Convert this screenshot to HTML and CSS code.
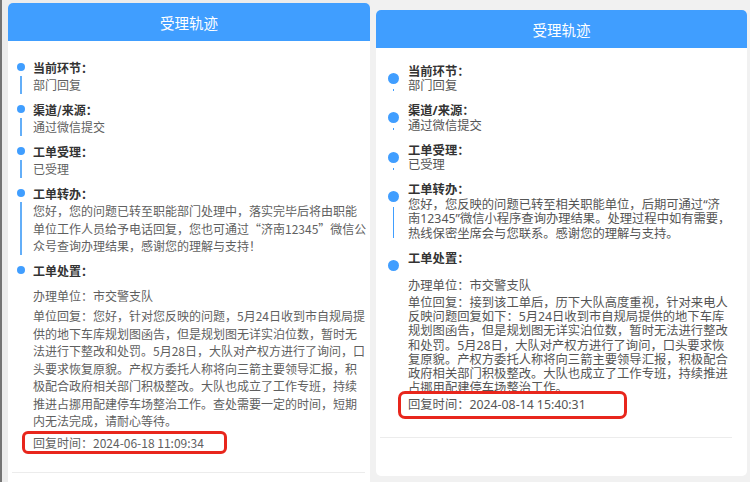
FILE: index.html
```html
<!DOCTYPE html>
<html lang="zh-CN">
<head>
  <meta charset="UTF-8" />
  <title>受理轨迹</title>
  <meta name="viewport" content="width=device-width, initial-scale=1.0" />
  <link rel="stylesheet" href="styles.css">
</head>
<body>
  <div class="screens">

    <section class="phone phone-a">
      <div class="card">
        <div class="card-head">受理轨迹</div>
        <ul class="track">
          <li class="step">
            <div class="mark"><span class="dot"></span><span class="line"></span></div>
            <div class="step-body">
              <p class="step-title">当前环节：</p>
              <p class="step-text">部门回复</p>
            </div>
          </li>
          <li class="step">
            <div class="mark"><span class="dot"></span><span class="line"></span></div>
            <div class="step-body">
              <p class="step-title">渠道/来源：</p>
              <p class="step-text">通过微信提交</p>
            </div>
          </li>
          <li class="step">
            <div class="mark"><span class="dot"></span><span class="line"></span></div>
            <div class="step-body">
              <p class="step-title">工单受理：</p>
              <p class="step-text">已受理</p>
            </div>
          </li>
          <li class="step">
            <div class="mark"><span class="dot"></span><span class="line"></span></div>
            <div class="step-body">
              <p class="step-title">工单转办：</p>
              <p class="step-text">您好，您的问题已转至职能部门处理中，落实完毕后将由职能单位工作人员给予电话回复，您也可通过“济南12345”微信公众号查询办理结果，感谢您的理解与支持！</p>
            </div>
          </li>
          <li class="step step-last">
            <div class="mark"><span class="dot"></span></div>
            <div class="step-body">
              <p class="step-title">工单处置：</p>
              <p class="step-text unit">办理单位：市交警支队</p>
              <p class="step-text reply">单位回复：您好，针对您反映的问题，5月24日收到市自规局提供的地下车库规划图函告，但是规划图无详实泊位数，暂时无法进行下整改和处罚。5月28日，大队对产权方进行了询问，口头要求恢复原貌。产权方委托人称将向三箭主要领导汇报，积极配合政府相关部门积极整改。大队也成立了工作专班，持续推进占挪用配建停车场整治工作。查处需要一定的时间，短期内无法完成，请耐心等待。</p>
              <p class="step-text"><span class="reply-time">回复时间：2024-06-18 11:09:34</span></p>
            </div>
          </li>
        </ul>
        <div class="card-rule"></div>
      </div>
    </section>

    <section class="phone phone-b">
      <div class="card">
        <div class="card-head">受理轨迹</div>
        <ul class="track">
          <li class="step">
            <div class="mark"><span class="dot"></span><span class="line"></span></div>
            <div class="step-body">
              <p class="step-title">当前环节：</p>
              <p class="step-text">部门回复</p>
            </div>
          </li>
          <li class="step">
            <div class="mark"><span class="dot"></span><span class="line"></span></div>
            <div class="step-body">
              <p class="step-title">渠道/来源：</p>
              <p class="step-text">通过微信提交</p>
            </div>
          </li>
          <li class="step">
            <div class="mark"><span class="dot"></span><span class="line"></span></div>
            <div class="step-body">
              <p class="step-title">工单受理：</p>
              <p class="step-text">已受理</p>
            </div>
          </li>
          <li class="step">
            <div class="mark"><span class="dot"></span><span class="line"></span></div>
            <div class="step-body">
              <p class="step-title">工单转办：</p>
              <p class="step-text">您好，您反映的问题已转至相关职能单位，后期可通过“济南12345”微信小程序查询办理结果。处理过程中如有需要，热线保密坐席会与您联系。感谢您的理解与支持。</p>
            </div>
          </li>
          <li class="step step-last">
            <div class="mark"><span class="dot"></span></div>
            <div class="step-body">
              <p class="step-title">工单处置：</p>
              <p class="step-text unit">办理单位：市交警支队</p>
              <p class="step-text reply">单位回复：接到该工单后，历下大队高度重视，针对来电人反映问题回复如下：5月24日收到市自规局提供的地下车库规划图函告，但是规划图无详实泊位数，暂时无法进行整改和处罚。5月28日，大队对产权方进行了询问，口头要求恢复原貌。产权方委托人称将向三箭主要领导汇报，积极配合政府相关部门积极整改。大队也成立了工作专班，持续推进占挪用配建停车场整治工作。</p>
              <p class="step-text"><span class="reply-time">回复时间：2024-08-14 15:40:31</span></p>
            </div>
          </li>
        </ul>
        <div class="card-rule"></div>
      </div>
    </section>

  </div>
</body>
</html>
```

FILE: styles.css
```css
:root {
  --blue: #409eff;
  --title: #333;
  --text: #5f5f5f;
  --mark-red: #e8261c;
}
* {
  margin: 0;
  padding: 0;
  box-sizing: border-box;
}
html, body {
  width: 750px;
  height: 482px;
  overflow: hidden;
  background: #efefef;
  font-family: "Noto Sans CJK SC", "Noto Sans", sans-serif;
}
ul {
  list-style: none;
}
.screens {
  display: flex;
  height: 482px;
}
.phone {
  display: flex;
  flex-direction: column;
}
.card {
  flex: 1;
  background: #fff;
  border-radius: 5px 5px 0 0;
}
.card-head {
  height: 38px;
  display: flex;
  align-items: center;
  justify-content: center;
  background: var(--blue);
  color: #fff;
  font-size: 14.5px;
  border-radius: 5px 5px 0 0;
}
.step {
  display: grid;
}
.mark {
  display: flex;
  flex-direction: column;
  align-items: center;
}
.dot {
  flex: none;
  border-radius: 50%;
  background: var(--blue);
}
.line {
  flex: 1;
  width: 1.5px;
  background: var(--blue);
}
.step-title {
  font-weight: 700;
  color: var(--title);
}
.step-text {
  color: var(--text);
}
.reply-time {
  display: inline-block;
  border: 3px solid var(--mark-red);
  border-radius: 6px;
}
.card-rule {
  height: 1px;
  background: #ececec;
}

/* left screenshot */
.phone-a {
  width: 370px;
  border-left: 2px solid #747474;
  background: #ececec;
  padding: 3px 0 0 6px;
}
.phone-a .track {
  padding: 17.5px 2.5px 0 9px;
  font-size: 12px;
  line-height: 17.5px;
}
.phone-a .step {
  grid-template-columns: 8px 1fr;
  column-gap: 8px;
  padding-bottom: 7px;
}
.phone-a .step-last {
  padding-bottom: 0;
}
.phone-a .dot {
  width: 8px;
  height: 8px;
  margin-top: 4.75px;
}
.phone-a .line {
  margin-top: 5px;
  width: 1.2px;
  background: #63aef8;
}
.phone-a .unit {
  margin-top: 8px;
}
.phone-a .reply {
  margin-top: 2.5px;
}
.phone-a .reply-time {
  margin: 1.5px 0 0 -11px;
  padding: 0 20px 0 8px;
  line-height: 17px;
}
.phone-a .card-rule {
  margin: 18px 5px 0 4px;
}

/* right screenshot, other phone font */
.phone-b {
  width: 380px;
  background: #f1f1f1;
  padding: 10px 3px 6px 6px;
  font-family: "Noto Sans", "Noto Sans CJK SC", sans-serif;
}
.phone-b .card {
  border-radius: 5px;
}
.phone-b .track {
  padding: 16.75px 15px 0 12px;
  font-size: 12.3px;
  line-height: 14.5px;
}
.phone-b .step {
  grid-template-columns: 11px 1fr;
  column-gap: 9px;
  padding-bottom: 10.5px;
}
.phone-b .step-last {
  padding-bottom: 0;
}
.phone-b .dot {
  width: 11px;
  height: 11px;
  margin-top: 8px;
}
.phone-b .line {
  margin: 5px 0 3px;
}
.phone-b .step-text {
  color: #555;
}
.phone-b .unit {
  margin-top: 12.5px;
}
.phone-b .reply {
  margin-top: 3px;
  line-height: 14.1px;
}
.phone-b .reply-time {
  margin: -4px 0 0 -10px;
  padding: 4px 38px 4px 7px;
  border-radius: 7px;
}
.phone-b .card-rule {
  margin: 18px 15px 0 4px;
}
```
